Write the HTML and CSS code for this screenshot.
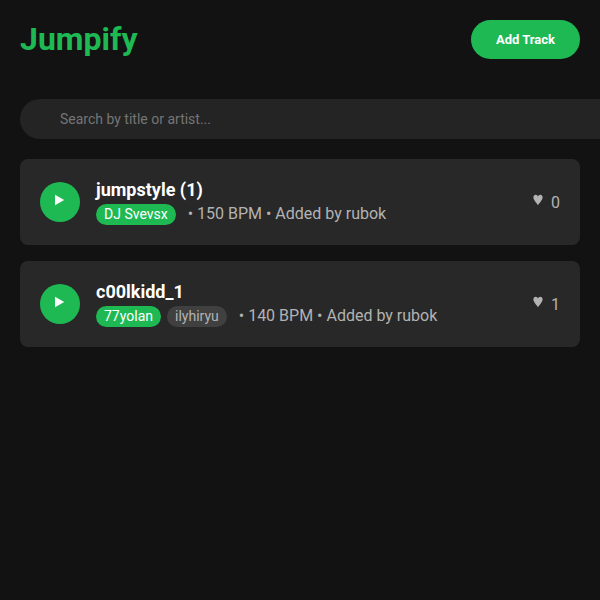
FILE: index.html
```html
<!DOCTYPE html>
<html lang="en">
<head>
    <meta charset="UTF-8">
    <meta name="viewport" content="width=device-width, initial-scale=1.0">
    <title>Jumpify</title>
    <link rel="stylesheet" href="styles.css">
</head>
<body>
    <header class="header">
        <h1 class="logo">Jumpify</h1>
        <button class="add-btn" type="button">Add Track</button>
    </header>

    <div class="search">
        <input class="search-input" type="text" placeholder="Search by title or artist..." aria-label="Search by title or artist">
    </div>

    <main class="track-list">
        <article class="track">
            <button class="play-btn" type="button" aria-label="Play jumpstyle (1)">
                <svg width="10" height="12" viewBox="0 0 10 12"><path d="M0 0.8 L9.2 6 L0 11.2 Z" fill="white"/></svg>
            </button>
            <div class="track-info">
                <h2 class="track-title">jumpstyle (1)</h2>
                <div class="track-meta">
                    <span class="artist main">DJ Svevsx</span>
                    <span class="details">• 150 BPM • Added by rubok</span>
                </div>
            </div>
            <div class="likes">
                <button class="like-btn" type="button" aria-label="Like">
                    <svg width="10" height="12" viewBox="0 0 10 12"><path d="M5 11.3 C4 9 0.4 6.2 0.4 3.4 C0.4 1.7 1.4 0.8 2.6 0.8 C3.8 0.8 4.6 1.6 5 2.6 C5.4 1.6 6.2 0.8 7.4 0.8 C8.6 0.8 9.6 1.7 9.6 3.4 C9.6 6.2 6 9 5 11.3 Z" fill="currentColor"/></svg>
                </button>
                <span>0</span>
            </div>
        </article>

        <article class="track">
            <button class="play-btn" type="button" aria-label="Play c00lkidd_1">
                <svg width="10" height="12" viewBox="0 0 10 12"><path d="M0 0.8 L9.2 6 L0 11.2 Z" fill="white"/></svg>
            </button>
            <div class="track-info">
                <h2 class="track-title">c00lkidd_1</h2>
                <div class="track-meta">
                    <span class="artist main">77yolan</span>
                    <span class="artist">ilyhiryu</span>
                    <span class="details">• 140 BPM • Added by rubok</span>
                </div>
            </div>
            <div class="likes">
                <button class="like-btn" type="button" aria-label="Like">
                    <svg width="10" height="12" viewBox="0 0 10 12"><path d="M5 11.3 C4 9 0.4 6.2 0.4 3.4 C0.4 1.7 1.4 0.8 2.6 0.8 C3.8 0.8 4.6 1.6 5 2.6 C5.4 1.6 6.2 0.8 7.4 0.8 C8.6 0.8 9.6 1.7 9.6 3.4 C9.6 6.2 6 9 5 11.3 Z" fill="currentColor"/></svg>
                </button>
                <span>1</span>
            </div>
        </article>
    </main>
</body>
</html>
```
FILE: styles.css
```css
body {
    margin: 0;
    padding: 20px;
    font-family: Roboto, sans-serif;
    background: #121212;
    color: #fff;
}
button, input {
    font-family: inherit;
    border: none;
}
button {
    cursor: pointer;
}
.header {
    display: flex;
    justify-content: space-between;
    align-items: center;
    margin-bottom: 40px;
}
.logo {
    margin: 0;
    font-size: 32px;
    line-height: 39px;
    color: #1fb954;
}
.add-btn {
    padding: 12px 25px;
    border-radius: 20px;
    background: #1fb954;
    color: #fff;
    font-size: 13px;
    line-height: 15px;
    font-weight: bold;
}
/* the bar runs to the right edge of the window */
.search {
    margin: 0 -20px 20px 0;
}
.search-input {
    display: block;
    box-sizing: border-box;
    width: 100%;
    height: 40px;
    padding: 12px 40px;
    border-radius: 20px 0 0 20px;
    background: #242424;
    color: #fff;
    font-size: 14px;
}
.search-input::placeholder {
    color: #757575;
}
.track-list {
    display: grid;
    gap: 16px;
}
.track {
    display: flex;
    align-items: center;
    gap: 16px;
    padding: 20px;
    border-radius: 8px;
    background: #282828;
}
.play-btn {
    display: flex;
    justify-content: center;
    flex-shrink: 0;
    width: 40px;
    height: 40px;
    padding: 12px 0;
    border-radius: 50%;
    background: #1fb954;
}
.track-info {
    flex: 1;
}
.track-title {
    margin: 0 0 4px;
    font-size: 18px;
    line-height: 21px;
}
.track-meta {
    display: flex;
    align-items: center;
    gap: 6px;
    color: #b3b3b3;
}
.artist {
    padding: 2px 8px;
    border-radius: 12px;
    background: #404040;
    font-size: 14px;
    line-height: 17px;
}
.artist.main {
    background: #1fb954;
    color: #fff;
}
.details {
    margin-left: 6px;
    padding-bottom: 2px;
    font-size: 16px;
    line-height: 19px;
}
.likes {
    display: flex;
    align-items: center;
    gap: 8px;
    color: #b3b3b3;
    font-size: 16px;
}
.like-btn {
    display: flex;
    padding: 0 0 4px;
    background: none;
    color: inherit;
}
```
